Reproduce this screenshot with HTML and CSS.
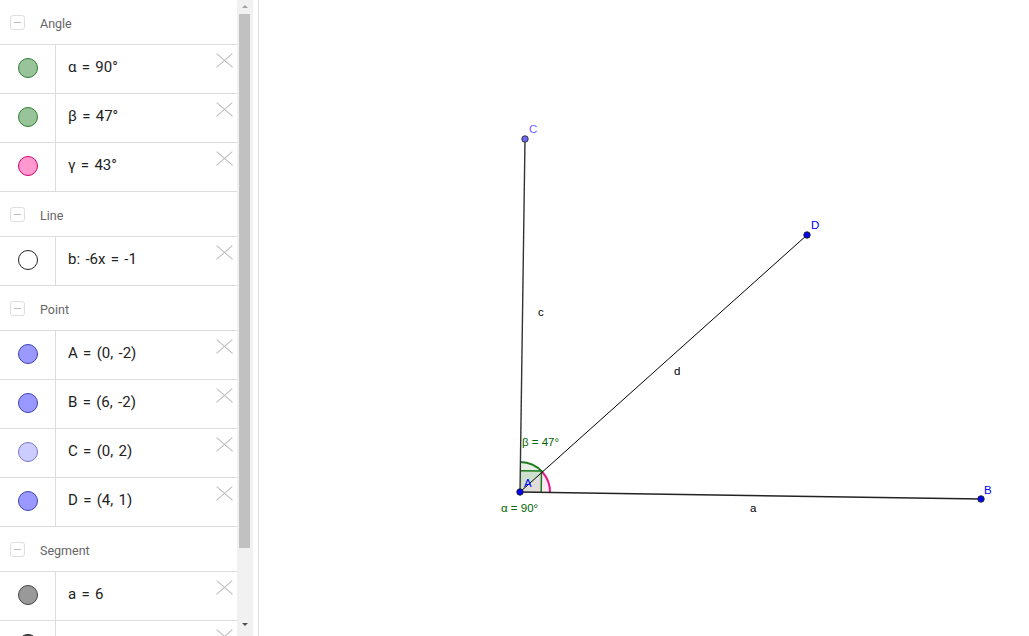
FILE: index.html
```html
<!DOCTYPE html>
<html>
<head>
<meta charset="utf-8">
<link rel="stylesheet" href="styles.css">
</head>
<body>
<div class="app">
  <aside class="algebra">
    <div class="list">
      <div class="group-head"><span class="toggle"></span><span class="group-name">Angle</span></div>
      <div class="item"><div class="marble-col"><span class="marble m-green"></span></div><div class="item-main">α = 90°</div><span class="del"></span></div>
      <div class="item"><div class="marble-col"><span class="marble m-green"></span></div><div class="item-main">β = 47°</div><span class="del"></span></div>
      <div class="item"><div class="marble-col"><span class="marble m-pink"></span></div><div class="item-main">γ = 43°</div><span class="del"></span></div>
      <div class="group-head"><span class="toggle"></span><span class="group-name">Line</span></div>
      <div class="item"><div class="marble-col"><span class="marble m-white"></span></div><div class="item-main">b: -6x = -1</div><span class="del"></span></div>
      <div class="group-head"><span class="toggle"></span><span class="group-name">Point</span></div>
      <div class="item"><div class="marble-col"><span class="marble m-blue"></span></div><div class="item-main">A = (0, -2)</div><span class="del"></span></div>
      <div class="item"><div class="marble-col"><span class="marble m-blue"></span></div><div class="item-main">B = (6, -2)</div><span class="del"></span></div>
      <div class="item"><div class="marble-col"><span class="marble m-light"></span></div><div class="item-main">C = (0, 2)</div><span class="del"></span></div>
      <div class="item"><div class="marble-col"><span class="marble m-blue"></span></div><div class="item-main">D = (4, 1)</div><span class="del"></span></div>
      <div class="group-head"><span class="toggle"></span><span class="group-name">Segment</span></div>
      <div class="item"><div class="marble-col"><span class="marble m-gray"></span></div><div class="item-main">a = 6</div><span class="del"></span></div>
      <div class="item"><div class="marble-col"><span class="marble m-dark"></span></div><div class="item-main"></div><span class="del"></span></div>
    </div>
    <div class="scrollbar">
      <span class="arrow-up"></span>
      <span class="thumb"></span>
      <span class="arrow-down"></span>
    </div>
  </aside>
  <main class="canvas">
    <svg class="graphics" width="770" height="636" viewBox="259 0 770 636" xmlns="http://www.w3.org/2000/svg">
      <!-- angle sectors -->
      <path d="M520,492 L550,492.46 A30,30 0 0 0 542.35,471.99 Z" fill="rgba(204,0,102,0.08)" stroke="none"/>
      <path d="M520,492 L542.35,471.99 A30,30 0 0 0 520.42,462 Z" fill="rgba(0,100,0,0.1)" stroke="none"/>
      <path d="M520,492 L541.2,492.3 L541.5,471.1 L520.3,470.8 Z" fill="rgba(0,100,0,0.1)" stroke="none"/>
      <path d="M550,492.46 A30,30 0 0 0 542.35,471.99" fill="none" stroke="#e6198c" stroke-width="2"/>
      <path d="M542.35,471.99 A30,30 0 0 0 520.42,462" fill="none" stroke="#1e7a1e" stroke-width="2"/>
      <path d="M541.2,492.3 L541.5,471.1 L520.3,470.8" fill="none" stroke="#1e7a1e" stroke-width="1.5"/>
      <!-- segments -->
      <line x1="520" y1="492" x2="525" y2="139" stroke="#333" stroke-width="1.4"/>
      <line x1="520" y1="492" x2="807" y2="235" stroke="#000" stroke-width="1"/>
      <line x1="520" y1="492" x2="981" y2="499" stroke="#222" stroke-width="1.5"/>
      <!-- points -->
      <circle cx="525" cy="139" r="3.2" fill="#6b6bff" stroke="#333" stroke-width="1"/>
      <circle cx="807" cy="235" r="3.2" fill="#0000ff" stroke="#222" stroke-width="1"/>
      <circle cx="981" cy="499" r="3.2" fill="#0000ff" stroke="#222" stroke-width="1"/>
      <circle cx="520" cy="492" r="3.2" fill="#0000ff" stroke="#222" stroke-width="1"/>
      <!-- labels -->
      <text class="lbl lbl-light" x="529" y="133">C</text>
      <text class="lbl lbl-blue" x="811" y="229">D</text>
      <text class="lbl lbl-blue" x="984" y="494">B</text>
      <text class="lbl lbl-blue" x="524" y="487">A</text>
      <text class="lbl" x="538" y="316">c</text>
      <text class="lbl" x="674" y="375">d</text>
      <text class="lbl" x="750" y="512">a</text>
      <text class="lbl lbl-green" x="522" y="446">β = 47°</text>
      <text class="lbl lbl-green" x="501" y="512">α = 90°</text>
    </svg>
  </main>
</div>
</body>
</html>
```
FILE: styles.css
```css
html, body {
  margin: 0;
  padding: 0;
  background: #fff;
}
.app {
  display: flex;
  width: 1029px;
  height: 636px;
  overflow: hidden;
}
.algebra {
  width: 258px;
  border-right: 1px solid #e0e0e0;
  display: flex;
  flex: none;
  height: 636px;
  overflow: hidden;
}
.list {
  width: 237px;
  flex: none;
  overflow: hidden;
  font-family: Roboto, "Liberation Sans", sans-serif;
}
.group-head {
  height: 44px;
  border-bottom: 1px solid #dcdcdc;
  display: flex;
  align-items: center;
  padding-top: 1px;
  box-sizing: border-box;
  height: 45px;
}
.toggle {
  width: 13px;
  height: 13px;
  margin-left: 10px;
  border: 1px solid #dedede;
  border-radius: 3px;
  position: relative;
  box-sizing: content-box;
}
.toggle::after {
  content: "";
  position: absolute;
  left: 3px;
  right: 3px;
  top: 6px;
  height: 1px;
  background: #bdbdbd;
}
.group-name {
  margin-left: 15px;
  font-size: 12.5px;
  color: #666;
  padding-top: 1px;
}
.item {
  height: 49px;
  box-sizing: border-box;
  border-bottom: 1px solid #dcdcdc;
  display: flex;
}
.marble-col {
  width: 56px;
  border-right: 1px solid #dcdcdc;
  display: flex;
  align-items: center;
  justify-content: center;
  padding-bottom: 3px;
  box-sizing: border-box;
}
.marble {
  width: 18px;
  height: 18px;
  border-radius: 50%;
  border: 1px solid #333;
}
.m-green { background: #99c499; border-color: #2e7d32; }
.m-pink { background: #ff99d0; border-color: #d0006a; }
.m-white { background: #fff; border-color: #222; }
.m-blue { background: #9999ff; border-color: #4040b0; }
.m-light { background: #ccccff; border-color: #7878c8; }
.m-gray { background: #999; border-color: #444; }
.m-dark { background: #555; border-color: #222; }
.item-main {
  flex: 1;
  display: flex;
  align-items: center;
  padding-left: 12px;
  padding-bottom: 4px;
  font-size: 15px;
  color: #222;
  white-space: pre;
  word-spacing: 1.6px;
}
.del {
  width: 16px;
  height: 14px;
  margin-top: 9px;
  margin-right: 6px;
  position: relative;
  flex: none;
}
.del::before, .del::after {
  content: "";
  position: absolute;
  left: -1px;
  top: 6px;
  width: 21px;
  height: 1.4px;
  background: #bbb;
}
.del::before { transform: rotate(41deg); }
.del::after { transform: rotate(-41deg); }
.scrollbar {
  width: 16px;
  flex: none;
  background: #f1f1f1;
  position: relative;
}
.thumb {
  position: absolute;
  left: 2px;
  width: 11px;
  top: 14px;
  height: 534px;
  background: #c1c1c1;
}
.arrow-up, .arrow-down {
  position: absolute;
  left: 5px;
  width: 0;
  height: 0;
  border-left: 3px solid transparent;
  border-right: 3px solid transparent;
}
.arrow-up { top: 5px; border-bottom: 3px solid #a3a3a3; }
.arrow-down { top: 623px; border-top: 3px solid #505050; }
.canvas {
  flex: 1;
  height: 636px;
}
.graphics {
  display: block;
}
.lbl {
  font-family: "Liberation Sans", Arial, sans-serif;
  font-size: 11.5px;
  fill: #000;
}
.lbl-blue { fill: #0000ff; }
.lbl-light { fill: #6666ff; }
.lbl-green { fill: #006400; }
```
